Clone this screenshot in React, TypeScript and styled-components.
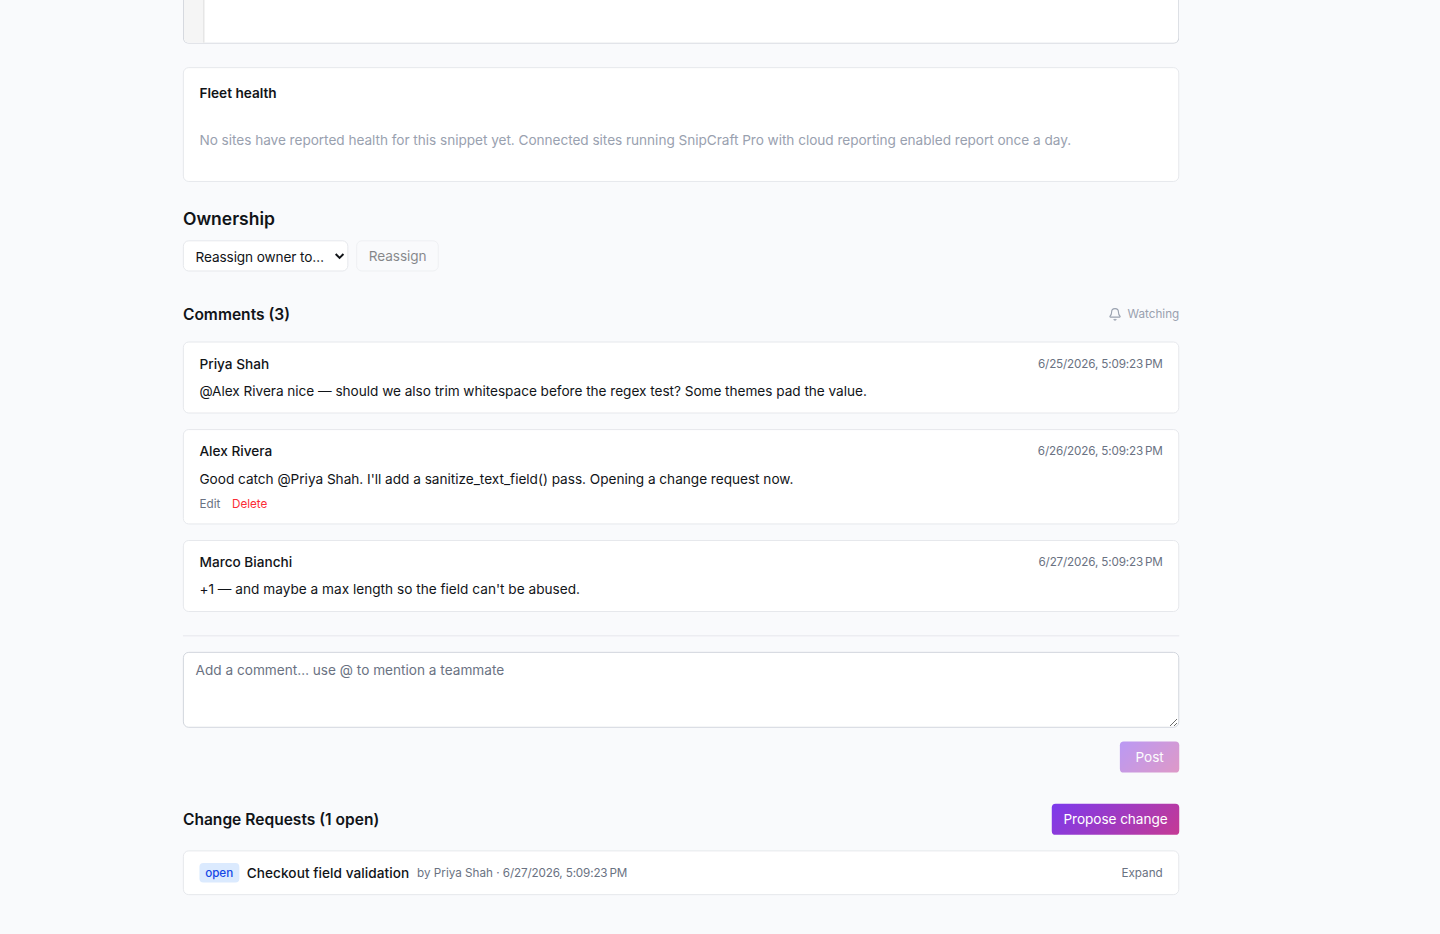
import React from "react";
import styled, { createGlobalStyle } from "styled-components";
import { Bell } from "lucide-react";

const GlobalStyle = createGlobalStyle`
  *, *::before, *::after { box-sizing: border-box; }
  html { background: #f9fafc; overflow: hidden; height: 100%; }
  body { margin: 0; height: 100%; overflow: hidden; }
  body, button, select, textarea { font-family: Inter, sans-serif; }
  h2, h3, p { margin: 0; }
`;

const Page = styled.main`
  transform: scale(0.97297);
  transform-origin: 0 0;
  width: 1480px;
  height: 960px;
  overflow: hidden;
  padding-left: 188px;
  background: #f9fafc;
  color: #111418;
  font-size: 14px;
  line-height: 20px;
`;

const Content = styled.div`
  width: 1024px;
`;

const Editor = styled.div`
  display: flex;
  height: 45px;
  background: #fff;
  border: 1px solid #d1d5dc;
  border-top: 0;
  border-radius: 0 0 6px 6px;
  overflow: hidden;
`;

const Gutter = styled.div`
  width: 21px;
  background: #f5f5f5;
  border-right: 1px solid #ddd;
`;

const Card = styled.article`
  background: #fff;
  border: 1px solid #e5e7eb;
  border-radius: 6px;
  padding: 12px 16px;
`;

const HealthCard = styled(Card)`
  margin-top: 24px;
  padding: 16px;
`;

const HealthTitle = styled.h3`
  font-size: 14px;
  line-height: 20px;
  font-weight: 600;
  margin-bottom: 12px;
`;

const EmptyText = styled.p`
  padding: 16px 0;
  color: #99a1af;
  letter-spacing: -0.04px;
`;

const Section = styled.section<{ $gap: number }>`
  margin-top: ${(p) => p.$gap}px;
`;

const SectionTitle = styled.h2<{ $large?: boolean }>`
  font-size: ${(p) => (p.$large ? 18 : 16)}px;
  line-height: ${(p) => (p.$large ? 28 : 24)}px;
  font-weight: 600;
`;

const SectionHeader = styled.header`
  display: flex;
  align-items: center;
  justify-content: space-between;
  margin-bottom: 16px;
`;

const OwnerRow = styled.div`
  display: flex;
  gap: 8px;
  margin-top: 8px;
`;

const OwnerSelect = styled.select`
  width: 170px;
  height: 32px;
  padding: 0 4px 0 8px;
  border: 1px solid #e5e7eb;
  border-radius: 6px;
  background-color: #fff;
  color: #111418;
  font-size: 14px;
  letter-spacing: -0.12px;
`;

const Button = styled.button<{ $variant: "outline" | "primary"; $pad?: number }>`
  height: 32px;
  padding: 0 ${(p) => p.$pad ?? 12}px;
  border: ${(p) => (p.$variant === "outline" ? "1px solid #e5e7eb" : "0")};
  border-radius: ${(p) => (p.$variant === "outline" ? 6 : 4)}px;
  background: ${(p) =>
    p.$variant === "outline" ? "transparent" : "linear-gradient(135deg, #7c3aed, #c53a94)"};
  color: ${(p) => (p.$variant === "outline" ? "#111418" : "#fff")};
  font-size: 14px;
  line-height: 20px;
  letter-spacing: -0.07px;
  &:disabled { opacity: 0.5; }
`;

const Watching = styled.span`
  display: flex;
  align-items: center;
  gap: 6px;
  color: #99a1af;
  font-size: 12px;
  line-height: 16px;
`;

const CommentList = styled.div`
  display: grid;
  gap: 16px;
`;

const CommentHead = styled.div`
  display: flex;
  align-items: center;
  justify-content: space-between;
  margin-bottom: 8px;
`;

const CommentText = styled.p<{ $tracking: number }>`
  letter-spacing: ${(p) => p.$tracking}px;
`;

const Strong = styled.span`
  font-weight: 500;
`;

const RequestTitle = styled(Strong)`
  letter-spacing: 0.06px;
`;

const Meta = styled.span`
  color: #6a7282;
  font-size: 12px;
  line-height: 16px;
`;

const Timestamp = styled.time`
  color: #6a7282;
  font-size: 12px;
  line-height: 16px;
  letter-spacing: -0.155px;
`;

const Actions = styled.div`
  display: flex;
  gap: 12px;
  margin-top: 8px;
`;

const LinkButton = styled.button<{ $danger?: boolean }>`
  padding: 0;
  border: 0;
  background: none;
  color: ${(p) => (p.$danger ? "#fb2c36" : "#6a7282")};
  font-size: 12px;
  line-height: 16px;
`;

const Composer = styled.form`
  margin-top: 24px;
  padding-top: 16px;
  border-top: 1px solid #e5e7eb;
`;

const CommentInput = styled.textarea`
  display: block;
  width: 100%;
  height: 78px;
  padding: 8px 12px;
  border: 1px solid #d1d5dc;
  border-radius: 6px;
  background: #fff;
  font-size: 14px;
  line-height: 20px;
  &::placeholder { color: #6a7282; }
`;

const ComposerFooter = styled.div`
  display: flex;
  justify-content: flex-end;
  margin-top: 14px;
`;

const RequestCard = styled(Card)`
  display: flex;
  align-items: center;
  gap: 8px;
`;

const Badge = styled.span`
  padding: 2px 6px;
  border-radius: 4px;
  background: #dbeafe;
  color: #1447e6;
  font-size: 12px;
  line-height: 16px;
  font-weight: 500;
  letter-spacing: -0.1px;
`;

const Spacer = styled.span`
  flex: 1;
`;

const comments = [
  {
    author: "Priya Shah",
    date: "6/25/2026, 5:09:23\u202fPM",
    text: "@Alex Rivera nice — should we also trim whitespace before the regex test? Some themes pad the value.",
    tracking: -0.035,
  },
  {
    author: "Alex Rivera",
    date: "6/26/2026, 5:09:23\u202fPM",
    text: "Good catch @Priya Shah. I'll add a sanitize_text_field() pass. Opening a change request now.",
    tracking: -0.02,
    own: true,
  },
  {
    author: "Marco Bianchi",
    date: "6/27/2026, 5:09:23\u202fPM",
    text: "+1 — and maybe a max length so the field can't be abused.",
    tracking: 0.01,
  },
];

export default function App() {
  return (
    <>
      <GlobalStyle />
      <Page>
        <Content>
          <Editor>
            <Gutter />
          </Editor>

          <HealthCard>
            <HealthTitle>Fleet health</HealthTitle>
            <EmptyText>
              No sites have reported health for this snippet yet. Connected sites running SnipCraft
              Pro with cloud reporting enabled report once a day.
            </EmptyText>
          </HealthCard>

          <Section $gap={24}>
            <SectionTitle $large>Ownership</SectionTitle>
            <OwnerRow>
              <OwnerSelect defaultValue="">
                <option value="">Reassign owner to…</option>
              </OwnerSelect>
              <Button $variant="outline" disabled>
                Reassign
              </Button>
            </OwnerRow>
          </Section>

          <Section $gap={32}>
            <SectionHeader>
              <SectionTitle>Comments (3)</SectionTitle>
              <Watching>
                <Bell size={14} />
                Watching
              </Watching>
            </SectionHeader>
            <CommentList>
              {comments.map((c) => (
                <Card key={c.author}>
                  <CommentHead>
                    <Strong>{c.author}</Strong>
                    <Timestamp>{c.date}</Timestamp>
                  </CommentHead>
                  <CommentText $tracking={c.tracking}>{c.text}</CommentText>
                  {c.own && (
                    <Actions>
                      <LinkButton>Edit</LinkButton>
                      <LinkButton $danger>Delete</LinkButton>
                    </Actions>
                  )}
                </Card>
              ))}
            </CommentList>
            <Composer>
              <CommentInput placeholder="Add a comment… use @ to mention a teammate" />
              <ComposerFooter>
                <Button $variant="primary" $pad={16} disabled>
                  Post
                </Button>
              </ComposerFooter>
            </Composer>
          </Section>

          <Section $gap={32}>
            <SectionHeader>
              <SectionTitle>Change Requests (1 open)</SectionTitle>
              <Button $variant="primary">Propose change</Button>
            </SectionHeader>
            <RequestCard>
              <Badge>open</Badge>
              <RequestTitle>Checkout field validation</RequestTitle>
              <Meta>
                by Priya Shah · <Timestamp>6/27/2026, 5:09:23{"\u202f"}PM</Timestamp>
              </Meta>
              <Spacer />
              <LinkButton>Expand</LinkButton>
            </RequestCard>
          </Section>
        </Content>
      </Page>
    </>
  );
}
